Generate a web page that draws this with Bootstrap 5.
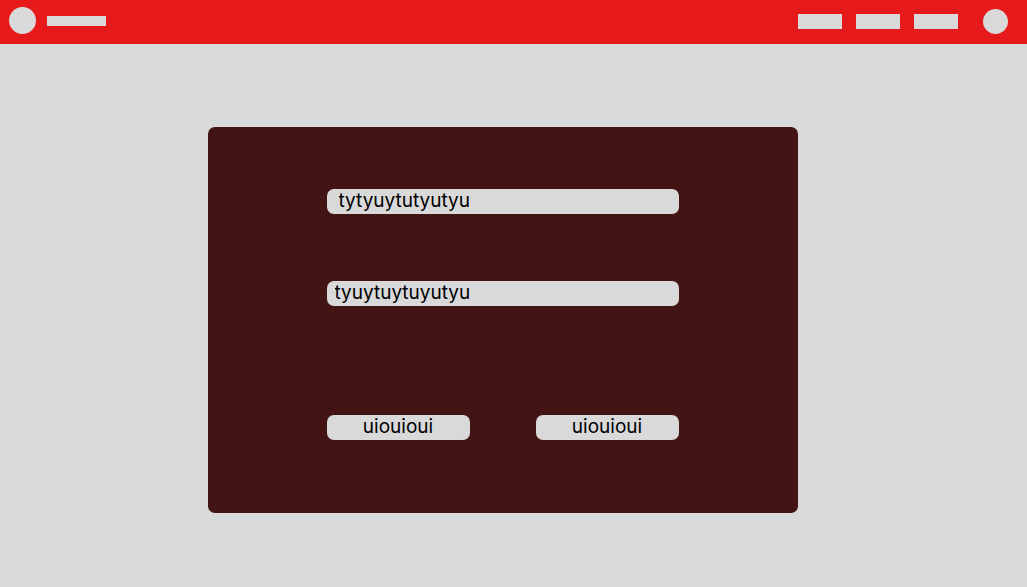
<!DOCTYPE html>
<html lang="en">
<head>
<meta charset="utf-8">
<meta name="viewport" content="width=device-width, initial-scale=1">
<title>Form</title>
<link href="https://cdn.jsdelivr.net/npm/bootstrap@5.3.0/dist/css/bootstrap.min.css" rel="stylesheet">
<style>
  :root { --tile: #d9d9d9; --brand: #e61a1a; --panel: #421414; }
  body { background: var(--tile); font-family: Inter, "Liberation Sans", sans-serif; }
  .topbar { background: var(--brand); height: 44px; padding: 0 19px 0 9px; }
  .logo-dot { width: 27px; height: 27px; background: var(--tile); margin-bottom: 4px; }
  .brand-bar { width: 59px; height: 10px; background: var(--tile); margin: 0 0 2px 11px; }
  .menu-links { gap: 14px; margin-right: 25px; }
  .menu-block { width: 44px; height: 15px; background: var(--tile); margin-bottom: 2px; }
  .avatar-dot { width: 25px; height: 25px; background: var(--tile); margin-bottom: 2px; }
  .panel-wrap { padding: 83px 22px 74px 0; }
  .panel { width: 590px; max-width: 100%; background: var(--panel); border-radius: 7px; padding: 62px 119px 73px; }
  .field, .action { height: 25px; border: 0; border-radius: 7px; background: var(--tile); color: #000; font-size: 19px; line-height: 23px; }
  .field { padding: 0 12px 2px; margin-bottom: 67px; }
  .field-second { padding: 0 8px 2px; margin-bottom: 109px; }
  .actions { gap: 66px; }
  .action { padding: 0 0 2px; flex: 1 1 0; }
</style>
</head>
<body>
<nav class="topbar d-flex align-items-center" aria-label="Main">
  <a href="#" class="logo-dot rounded-circle" aria-label="Home"></a>
  <a href="#" class="brand-bar" aria-label="Brand"></a>
  <div class="menu-links d-flex ms-auto">
    <a href="#" class="menu-block" aria-label="First section"></a>
    <a href="#" class="menu-block" aria-label="Second section"></a>
    <a href="#" class="menu-block" aria-label="Third section"></a>
  </div>
  <a href="#" class="avatar-dot rounded-circle" aria-label="Account"></a>
</nav>
<main class="panel-wrap d-flex justify-content-center">
  <form class="panel">
    <input class="field d-block w-100" type="text" value="tytyuytutyutyu" aria-label="First field">
    <input class="field field-second d-block w-100" type="text" value="tyuytuytuyutyu" aria-label="Second field">
    <div class="actions d-flex">
      <button type="button" class="action">uiouioui</button>
      <button type="button" class="action">uiouioui</button>
    </div>
  </form>
</main>
<script src="https://cdn.jsdelivr.net/npm/bootstrap@5.3.0/dist/js/bootstrap.bundle.min.js"></script>
</body>
</html>
